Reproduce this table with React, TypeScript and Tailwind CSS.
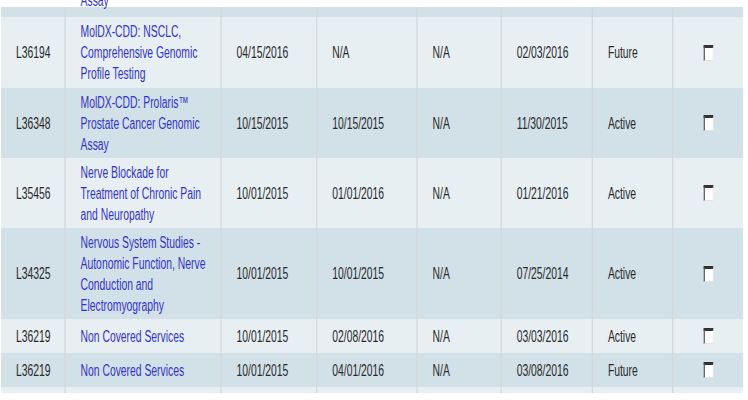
interface Row {
  id: string;
  title: string;
  effective: string;
  ending: string;
  retired: string;
  updated: string;
  status: string;
  height: string;
  dark: boolean;
}

const rows: Row[] = [
  { id: "L36194", title: "MolDX-CDD: NSCLC, Comprehensive Genomic Profile Testing", effective: "04/15/2016", ending: "N/A", retired: "N/A", updated: "02/03/2016", status: "Future", height: "h-[71px]", dark: false },
  { id: "L36348", title: "MolDX-CDD: Prolaris™ Prostate Cancer Genomic Assay", effective: "10/15/2015", ending: "10/15/2015", retired: "N/A", updated: "11/30/2015", status: "Active", height: "h-[70px]", dark: true },
  { id: "L35456", title: "Nerve Blockade for Treatment of Chronic Pain and Neuropathy", effective: "10/01/2015", ending: "01/01/2016", retired: "N/A", updated: "01/21/2016", status: "Active", height: "h-[70px]", dark: false },
  { id: "L34325", title: "Nervous System Studies - Autonomic Function, Nerve Conduction and Electromyography", effective: "10/01/2015", ending: "10/01/2015", retired: "N/A", updated: "07/25/2014", status: "Active", height: "h-[91px]", dark: true },
  { id: "L36219", title: "Non Covered Services", effective: "10/01/2015", ending: "02/08/2016", retired: "N/A", updated: "03/03/2016", status: "Active", height: "h-[34px]", dark: false },
  { id: "L36219", title: "Non Covered Services", effective: "10/01/2015", ending: "04/01/2016", retired: "N/A", updated: "03/08/2016", status: "Future", height: "h-[34px]", dark: true },
];

// the page is a squeezed screenshot, so the table is laid out wide and scaled on x
const grid = "grid grid-cols-[100px_241px_148px_155px_130px_141px_124px_108px]";
const cell = "flex items-center pl-[23px] border-r-2 border-[#d5d8da]";

function Checkbox() {
  return (
    <span className="block w-[15px] h-[16px] bg-white border-t-[3px] border-l-2 border-r border-b border-t-[#333] border-l-[#5a5a6e] border-r-[#e4e4e4] border-b-[#e4e4e4]" />
  );
}

export default function App() {
  return (
    <div className="w-[748px] h-[400px] overflow-hidden bg-white font-['Liberation_Sans',Arial,sans-serif] text-[16px] leading-[21px] text-[#2a2a2a]">
      <div className="ml-px w-[1147px] origin-top-left scale-x-[0.647]">
        <div className="h-[7px]" />

        {/* row cut off at the top */}
        <div className={`${grid} h-[10px] bg-[#d2e0e7]`}>
          <div className={cell} />
          <div className="flex items-start pl-[23px] pr-[15px] border-r-2 border-[#d5d8da] text-[#3333cc]">
            <span className="block -mt-[17px]">Assay</span>
          </div>
          <div className={cell} />
          <div className={cell} />
          <div className={cell} />
          <div className={cell} />
          <div className={cell} />
          <div />
        </div>

        {rows.map((r, i) => (
          <div key={i} className={`${grid} ${r.height} ${r.dark ? "bg-[#d2e0e7]" : "bg-[#e7eff3]"}`}>
            <div className={cell}>{r.id}</div>
            <div className={`${cell} pr-[15px] text-[#3333cc]`}>{r.title}</div>
            <div className={cell}>{r.effective}</div>
            <div className={cell}>{r.ending}</div>
            <div className={cell}>{r.retired}</div>
            <div className={cell}>{r.updated}</div>
            <div className={cell}>{r.status}</div>
            <div className="flex items-center justify-center">
              <Checkbox />
            </div>
          </div>
        ))}

        {/* next row, cut off at the bottom */}
        <div className={`${grid} h-[6px] bg-[#e7eff3]`}>
          <div className={cell} />
          <div className={cell} />
          <div className={cell} />
          <div className={cell} />
          <div className={cell} />
          <div className={cell} />
          <div className={cell} />
          <div />
        </div>
      </div>
    </div>
  );
}
